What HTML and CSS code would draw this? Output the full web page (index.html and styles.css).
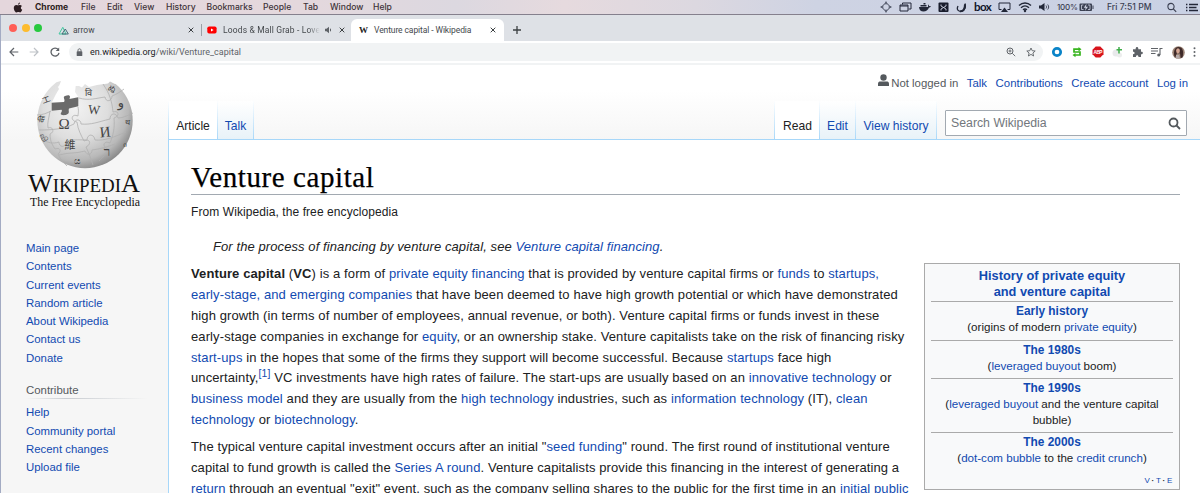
FILE: index.html
```html
<!DOCTYPE html>
<html lang="en">
<head>
<meta charset="utf-8">
<title>Venture capital - Wikipedia</title>
<link rel="stylesheet" href="styles.css">
</head>
<body>
<header class="menubar">
  <svg class="apple" width="10" height="11" viewBox="0 0 20 22"><path fill="#2b1d21" d="M14 1c0 2.500-1.800 4.300-3.800 4.300C10 3 12 1.200 14 1zM10.200 6.700c1.200 0 2-.9 3.800-.9 1.500 0 3 .8 3.800 2-3.300 2-2.800 6.400.6 7.700C17.500 18 15.900 21 14 21c-1.300 0-1.800-.8-3.500-.8S8.200 21 7 21c-2.500 0-5.400-5-5.400-9 0-3.700 2.400-6 5-6 1.600 0 2.700.7 3.600.7z"/></svg>
  <nav class="menus"><b>Chrome</b><span>File</span><span>Edit</span><span>View</span><span>History</span><span>Bookmarks</span><span>People</span><span>Tab</span><span>Window</span><span>Help</span></nav>
  <div class="status">
    <svg width="12" height="12" viewBox="0 0 12 12" fill="none" stroke="#3b4052"><path d="M6 1.500L10.500 6 6 10.500 1.500 6z"/><path d="M6 .5v3M6 8.500v3M.5 6h3M8.500 6h3"/></svg>
    <svg width="13" height="12" viewBox="0 0 13 12" fill="none" stroke="#222738"><path d="M1 4h8v6H1zM3.500 3.500v-1.500h8.500v6H9.500M1 5h8"/></svg>
    <svg width="12" height="12" viewBox="0 0 12 12" fill="#222738"><path d="M0 6h9c.3-1-.2-1.700 0-2.500.8.400 1 1 1 1.600l2 .2c-.4 1-1.300 1.200-2 1.200C9 9.300 7 10.500 4.500 10.500 2 10.500.2 9 0 6zM1.500 4h6v1.600h-6zM4.500 2h2v1.600h-2z"/></svg>
    <svg width="11" height="12" viewBox="0 0 11 12"><rect x="0.500" y="1.500" width="10" height="9.500" rx="1" fill="#181c2c"/><path d="M3 3.500v1.500l5 3V9.500M8 3.500v1.500L3 8V9.500" stroke="#cfd3e2" stroke-width=".9" fill="none"/></svg>
    <svg width="11" height="12" viewBox="0 0 11 12" fill="none" stroke="#222738"><path d="M2 5c-2 4 1 6 4 5 3-.8 4-4 3-7.500" stroke-width="1.300"/><path d="M4 10.200c3 .5 5-2 5-7" stroke-width="2"/></svg>
    <strong class="box">box</strong>
    <svg width="13" height="12" viewBox="0 0 13 12"><path d="M3.500 8.500H1V2h11v6.500H9.500" fill="none" stroke="#222738"/><path d="M6.500 6.500L10 11H3z" fill="#222738"/></svg>
    <svg width="14" height="12" viewBox="0 0 14 12" fill="none" stroke="#222738" stroke-width="1.400"><path d="M1 4.500c3.500-3.400 8.500-3.400 12 0M3 6.700c2.400-2.200 5.600-2.200 8 0M5 8.700c1.300-1 2.700-1 4 0"/><circle cx="7" cy="10" r=".5"/></svg>
    <svg width="12" height="12" viewBox="0 0 12 12"><path d="M0 4.500h2L5.500 2v8L2 7.500H0z" fill="#222738"/><path d="M7 4.500c.7 1 .7 2 0 3M8.700 3.500c1.300 1.600 1.300 3.400 0 5" stroke="#222738" stroke-width=".8" fill="none"/></svg>
    <span class="pct">100%</span>
    <svg width="15" height="12" viewBox="0 0 15 12"><rect x=".5" y="2.500" width="12.500" height="7.500" rx="1" fill="#3b4052"/><path d="M13.500 4.500h1v3.500h-1z" fill="#3b4052"/><path d="M4.300 4H2.500v4.500h2M9 4h2v4.500H9" stroke="#cdd2e2" stroke-width=".8" fill="none"/><path d="M7.500 2.800L4.800 6.700h1.900L6 9.700l3-4H7z" fill="#cdd2e2"/></svg>
    <span class="clock">Fri 7:51 PM</span>
    <svg width="10" height="12" viewBox="0 0 10 12" fill="none" stroke="#3b4052" stroke-width="1.100"><circle cx="4" cy="5.500" r="3.100"/><path d="M6.400 8l2.800 2.800"/></svg>
    <svg width="12" height="12" viewBox="0 0 12 12" stroke="#222738" stroke-width="1.300"><path d="M0 3.500h1.400M3 3.500h9M0 6.500h1.400M3 6.500h7.500M0 9.500h1.400M3 9.500h9"/></svg>
  </div>
</header>
<div class="window">
  <div class="tabs">
    <div class="lights"><i class="red"></i><i class="yellow"></i><i class="green"></i></div>
    <div class="tab tab-a">
      <svg width="11" height="9" viewBox="0 0 11 9" fill="none" stroke-width="1"><path d="M1 8l3.800-6.700L8 8z" stroke="#42c8a0"/><path d="M4 8l3.300-5L10.300 8z" stroke="#456b76"/></svg>
      <span class="tab-title">arrow</span>
      <svg class="x" width="6" height="6" viewBox="0 0 6 6"><path d="M.7.7l4.600 4.600M5.300.7L.7 5.300"/></svg>
    </div>
    <div class="tab tab-b">
      <svg width="10" height="8" viewBox="0 0 10 8"><rect x=".3" y=".5" width="9.300" height="7" rx="1.800" fill="#f00"/><path d="M4 2.500L6.600 4 4 5.500z" fill="#fff"/></svg>
      <span class="tab-title fade">Loods &amp; Mall Grab - Love Is</span>
      <svg class="snd" width="8" height="8" viewBox="0 0 8 8"><path d="M0 2.800h1.500L4 .8v6.400L1.500 5.200H0z" fill="#5f6368"/><path d="M5.500 2.700v2.600" stroke="#5f6368"/></svg>
      <svg class="x" width="6" height="6" viewBox="0 0 6 6"><path d="M.7.7l4.600 4.600M5.300.7L.7 5.300"/></svg>
    </div>
    <div class="tab active">
      <b class="w">W</b>
      <span class="tab-title">Venture capital - Wikipedia</span>
      <svg class="x" width="6" height="6" viewBox="0 0 6 6"><path d="M.7.7l4.600 4.600M5.300.7L.7 5.300"/></svg>
    </div>
    <svg class="plus" width="8" height="8" viewBox="0 0 8 8"><path d="M4 0v8M0 4h8" stroke="#3c4043" stroke-width="1.300"/></svg>
  </div>
  <div class="toolbar">
    <svg class="back" width="10" height="10" viewBox="0 0 10 10" fill="none" stroke="#5f6368" stroke-width="1.200"><path d="M9.300 5H1.200M5 1L1 5l4 4"/></svg>
    <svg class="fwd" width="10" height="10" viewBox="0 0 10 10" fill="none" stroke="#bdc1c6" stroke-width="1.200"><path d="M.7 5h8.100M5 1l4 4-4 4"/></svg>
    <svg class="reload" width="10" height="10" viewBox="0 0 10 10" fill="none" stroke="#5f6368" stroke-width="1.300"><path d="M8.300 2.700A4 4 0 1 0 9 5.800"/><path d="M9.200.5v3.500H5.700z" fill="#5f6368" stroke="none"/></svg>
    <div class="omnibox">
      <svg width="7" height="9" viewBox="0 0 7 9"><rect x=".7" y="3.300" width="5.600" height="4.700" rx=".6" fill="#5f6368"/><path d="M2 3.500V2.300c0-2 3-2 3 0v1.200" fill="none" stroke="#5f6368"/></svg>
      <span class="url"><em>en.wikipedia.org</em>/wiki/Venture_capital</span>
      <svg class="zoom" width="10" height="10" viewBox="0 0 10 10" fill="none" stroke="#5f6368"><circle cx="4" cy="4" r="3"/><path d="M6.300 6.300l2.900 2.900M2.500 4h3M4 2.500v3" stroke-width=".9"/></svg>
      <svg class="star" width="10" height="10" viewBox="0 0 10 10" fill="none" stroke="#5f6368" stroke-width=".9"><path d="M5 1l1.200 2.700 3 .3-2.300 2 .7 3L5 7.400 2.400 9l.7-3L.8 4l3-.3z"/></svg>
    </div>
    <div class="exts">
      <svg width="12" height="12" viewBox="0 0 12 12"><circle cx="6" cy="6" r="3.700" fill="#fff" stroke="#0a84c8" stroke-width="2.700"/></svg>
      <svg width="12" height="12" viewBox="0 0 12 12" fill="none" stroke="#36b41c" stroke-width="1.700"><path d="M8 3.200H3V6h6v3H4"/><path d="M7.500 1v4.400L10.500 3.200zM4.500 6.900v4.400L1.500 9z" fill="#36b41c" stroke="none"/></svg>
      <svg width="12" height="12" viewBox="0 0 12 12"><path d="M3.700.5h4.600l3.200 3.200v4.600l-3.200 3.200H3.700L.5 8.300V3.700z" fill="#d8141c"/><text x="6" y="7.800" text-anchor="middle" textLength="9" font-size="4.800" class="abp">ABP</text></svg>
      <svg width="12" height="12" viewBox="0 0 12 12"><circle cx="4" cy="7" r="3.500" fill="#e8e9eb"/><circle cx="7.500" cy="9" r="2.500" fill="#eceded"/><path d="M7 1v6.500M4.500 3.800h5.500" stroke="#3fae49" stroke-width="1.500"/></svg>
      <svg width="11" height="12" viewBox="0 0 11 12" fill="#5f6368"><path d="M1 3.300h2.700c-.5-3 3-3 2.600 0H9v2.500c2.500-.3 2.500 2.600 0 2.400V11H6.500c0-2.300-2.600-2.300-2.600 0H1V8.200c2.200 0 2.200-2.400 0-2.400z"/></svg>
      <svg width="12" height="12" viewBox="0 0 12 12"><path d="M0 2.500h7M0 5h7M0 7.500h4.500M9 9V2.500h2.500" stroke="#5f6368" fill="none" stroke-width="1.100"/><circle cx="7.700" cy="9" r="1.500" fill="#5f6368"/></svg>
      <svg width="13" height="13" viewBox="0 0 13 13"><circle cx="6.500" cy="6.500" r="6.300" fill="#9c8476"/><path d="M3 12C1 7 2 1 6.500 1S12 6 10.500 11.500L8.700 12 8 7.500 5 7z" fill="#3e2a29"/><ellipse cx="6" cy="4.800" rx="1.900" ry="2.500" fill="#d6a794"/><path d="M4 9l3 0 1 3.500H4z" fill="#b6aaa9"/></svg>
      <svg width="3" height="12" viewBox="0 0 3 12" fill="#5f6368"><circle cx="1.500" cy="2.300" r="1"/><circle cx="1.500" cy="6" r="1"/><circle cx="1.500" cy="9.700" r="1"/></svg>
    </div>
  </div>
  <div class="page">
    <aside class="side">
      <svg class="logo" width="120" height="134" viewBox="0 0 120 134">
        <defs>
          <radialGradient id="ball" cx=".4" cy=".36" r=".68"><stop offset="0" stop-color="#f2f2f2"/><stop offset=".5" stop-color="#dedede"/><stop offset=".82" stop-color="#b8b8b8"/><stop offset="1" stop-color="#858585"/></radialGradient>
          <clipPath id="disc"><path d="M0 2H36L40 1L38.500 5L37 7L38 9L34.500 15L30.700 22.700L43 22L44 16L48 16V19L57.300 17L54 12L54.700 6L58 6L61 7.500L64 4L68 7L76 5L87 3.500L89 1.500L94 4L97 3L120 0V134H0z"/></clipPath>
        </defs>
        <g clip-path="url(#disc)">
          <circle cx="64" cy="40.500" r="47.700" fill="url(#ball)"/>
          <g transform="translate(1 0)" fill="none" stroke="#b0b0b0" stroke-width=".8"><path d="M28 31c-1 7-3 12-2 17 5-2 7 4 2 6 0 8 3 12 5 15 5-2 7 2 3 5 2 5 5 8 9 12M56 27c1 5 0 7 0 9-7-3-8 5-1 6 1 8 4 13 7 19 6-3 8 3 2 6 3 6 5 12 7 18M81 4c7 10 9 18 10 28 6-2 7 4 1 6 1 10-1 18-4 25-7-3-8 4-2 6-3 6-5 8-9 12M15 35c6 0 10-2 14-4M17 50c14 0 25-1 35-6 1-6 7-5 7 0 10 1 17-2 29-5 0-6 6-7 8-1 6 0 10-3 15-5M19 59c7 4 12 5 18 3 0 6 7 6 7-1 8-2 15-1 21-1 0-6 7-7 8 0 10 1 19-3 31-8M37 75c10-3 16-1 26-4 2 5 7 4 7-1 8-1 15-3 23-6M57 18c10 3 18 0 26-1 1 6 7 4 7-1 5-2 8-4 12-7"/></g>
        </g>
        <path fill="#6a6a6a" d="M30.700 22.700L43 22c2-2-2-5 1-6 3-1 5-1 5 1l-.5 2 8.800-1.700v9L48 28.500c-1 2 1 4-1.300 5.500-2 1.500-5 1.500-6.700.5-1-1.500 2-3 .5-4.700l-9.800 1z"/>
        <g class="glyphs" text-anchor="middle"><text x="43" y="49" font-size="15">Ω</text><text x="73" y="34" font-size="13" textLength="12" lengthAdjust="spacingAndGlyphs" transform="rotate(5 73 30)">W</text><text x="84" y="57" font-size="15" transform="rotate(-6 84 52)">И</text><text x="49" y="69" font-size="11">維</text><text x="86" y="76" font-size="13">ר</text><text x="100" y="27" font-size="13">و</text><text x="67" y="16" font-size="9">वि</text><text x="91" y="12" font-size="8" transform="rotate(30 91 9)">ぬ</text><text x="25" y="23" font-size="9" transform="rotate(-20 25 19)">エ</text><text x="21" y="42" font-size="8" transform="rotate(-80 21 39)">की</text><text x="23" y="60" font-size="8" transform="rotate(60 23 57)">வி</text><text x="56" y="84" font-size="9">ය</text><text x="106" y="45" font-size="8">थ</text><text x="104" y="67" font-size="7">ი</text></g>
        <g class="wordmark"><text x="7" y="112" textLength="112" lengthAdjust="spacingAndGlyphs"><tspan font-size="25">W</tspan><tspan font-size="18">IKIPEDI</tspan><tspan font-size="25">A</tspan></text><text x="9" y="126" font-size="12.500" textLength="110" lengthAdjust="spacingAndGlyphs">The Free Encyclopedia</text></g>
      </svg>
      <nav class="links first"><a>Main page</a><a>Contents</a><a>Current events</a><a>Random article</a><a>About Wikipedia</a><a>Contact us</a><a>Donate</a></nav>
      <h3>Contribute</h3>
      <nav class="links"><a>Help</a><a>Community portal</a><a>Recent changes</a><a>Upload file</a></nav>
    </aside>
    <main class="main">
      <div class="head">
        <div class="personal">
          <svg width="11" height="13" viewBox="0 0 11 13" fill="#54595d"><circle cx="5.500" cy="3.500" r="3.200"/><path d="M0 12V9.500C0 8 1 7.400 2.500 7.400h6C10 7.400 11 8 11 9.500V12z"/></svg>
          <span>Not logged in</span><a>Talk</a><a>Contributions</a><a>Create account</a><a>Log in</a>
        </div>
        <div class="views">
          <div class="vt sel article">Article</div><div class="vt talk"><a>Talk</a></div>
          <div class="vt sel read">Read</div><div class="vt edit"><a>Edit</a></div><div class="vt hist"><a>View history</a></div>
          <div class="search"><span>Search Wikipedia</span><svg width="13" height="13" viewBox="0 0 13 13" fill="none" stroke="#54595d" stroke-width="1.800"><circle cx="5.500" cy="5.500" r="4"/><path d="M8.500 8.500l3.500 3.500"/></svg></div>
        </div>
      </div>
      <article class="content">
        <h1>Venture capital</h1>
        <p class="from">From Wikipedia, the free encyclopedia</p>
        <div class="cols">
          <div class="text">
            <p class="hat">For the process of financing by venture capital, see <a>Venture capital financing</a>.</p>
            <p class="para"><b>Venture capital</b> (<b>VC</b>) is a form of <a>private equity financing</a> that is provided by venture capital firms or <a>funds</a> to <a>startups,<br>early-stage, and emerging companies</a> that have been deemed to have high growth potential or which have demonstrated<br>high growth (in terms of number of employees, annual revenue, or both). Venture capital firms or funds invest in these<br>early-stage companies in exchange for <a>equity</a>, or an ownership stake. Venture capitalists take on the risk of financing risky<br><a>start-ups</a> in the hopes that some of the firms they support will become successful. Because <a>startups</a> face high<br>uncertainty,<sup><a>[1]</a></sup> VC investments have high rates of failure. The start-ups are usually based on an <a>innovative technology</a> or<br><a>business model</a> and they are usually from the <a>high technology</a> industries, such as <a>information technology</a> (IT), <a>clean<br>technology</a> or <a>biotechnology</a>.</p>
            <p class="para">The typical venture capital investment occurs after an initial "<a>seed funding</a>" round. The first round of institutional venture<br>capital to fund growth is called the <a>Series A round</a>. Venture capitalists provide this financing in the interest of generating a<br><a>return</a> through an eventual "exit" event, such as the company selling shares to the public for the first time in an <a>initial public</a></p>
          </div>
          <aside class="infobox">
            <h2><a>History of private equity<br>and venture capital</a></h2>
            <section><b><a>Early history</a></b><p>(origins of modern <a>private equity</a>)</p></section>
            <section><b><a>The 1980s</a></b><p>(<a>leveraged buyout</a> boom)</p></section>
            <section class="tall"><b><a>The 1990s</a></b><p>(<a>leveraged buyout</a> and the venture capital<br>bubble)</p></section>
            <section><b><a>The 2000s</a></b><p>(<a>dot-com bubble</a> to the <a>credit crunch</a>)</p></section>
            <div class="vte"><a>V</a><b>·</b><a>T</a><b>·</b><a>E</a></div>
          </aside>
        </div>
      </article>
    </main>
  </div>
</div>
</body>
</html>
```
FILE: styles.css
```css
* { box-sizing: border-box; }
body { margin: 0; width: 1200px; height: 493px; overflow: hidden; font-family: "Liberation Sans", Arial, sans-serif; color: #202122; background: #fff; }
p, h1, h2, h3 { margin: 0; font-weight: normal; }
a { color: #114ab1; }
svg { flex: none; display: block; }

.menubar { height: 15px; display: flex; align-items: center; border-bottom: 1px solid #85808d; background: linear-gradient(90deg, #e4d6dc 0, #e4d8dd 25%, #dcd8e0 38%, #e6dade 47%, #dcd8e0 58%, #ced3e3 68%, #c9d1e4 100%); font: 500 8.6px/14px Inter, sans-serif; color: #3e3339; white-space: nowrap; }
.apple { margin-left: 13px; }
.menus { display: grid; grid-template-columns: 46px 26px 27px 32px 40.500px 56.500px 40px 27px 43px 30px; margin-left: 12px; }
.menus b { font-weight: 700; color: #2b1d21; }
.status { margin-left: auto; display: flex; align-items: center; gap: 7px; margin-right: 2px; color: #3b4052; font-size: 8px; }
.box { font: 700 11.500px/12px Lato, sans-serif; letter-spacing: -.6px; color: #11152a; width: 17px; }
.pct { width: 20px; letter-spacing: -.2px; margin-left: -1px; }
.pct + svg { margin-left: -5px; }
.clock { font-size: 8.600px; width: 46px; margin-left: 6px; }
.clock + svg { margin-left: 7px; }
.status svg:last-child { margin-left: 2px; }

.window { border-left: 1px solid #a3abc3; height: 478px; }
.tabs { height: 26px; background: #dee1e6; display: flex; align-items: flex-end; font: 400 8.500px/22px Roboto, sans-serif; color: #45494d; }
.lights { display: flex; gap: 4.500px; width: 48px; padding: 0 0 9px 8px; }
.lights i { width: 8px; height: 8px; border-radius: 50%; flex: none; }
.red { background: #ff5f57; } .yellow { background: #fdbc2e; } .green { background: #27c93f; }
.tab { height: 22px; display: flex; align-items: center; white-space: nowrap; }
.tab-a { width: 152px; padding: 0 7px 0 9px; }
.tab-a .tab-title { margin-left: 4px; }
.x { margin-left: auto; stroke: #3c4043; stroke-width: 1; }
.tab-b { width: 150px; padding: 0 6px 0 6px; background: linear-gradient(#9aa0a6, #9aa0a6) 0 50% / 1px 12px no-repeat; }
.tab-b .tab-title { margin-left: 6px; width: 97px; overflow: hidden; letter-spacing: .15px; -webkit-mask-image: linear-gradient(90deg, #000 88%, transparent); mask-image: linear-gradient(90deg, #000 88%, transparent); }
.snd { margin-left: 5px; }
.active { width: 153px; background: #fff; border-radius: 6px 6px 0 0; padding: 0 8px; }
.w { font: 700 9px/22px "Liberation Serif", serif; color: #222; width: 10px; }
.active .tab-title { margin-left: 5px; letter-spacing: -.1px; }
.plus { margin: 0 0 7px 9px; }
.toolbar { height: 24px; border-bottom: 2px solid #f1f3f4; display: flex; align-items: center; }
.back { margin-left: 8px; } .fwd { margin-left: 10px; } .reload { margin-left: 11px; }
.omnibox { flex: none; width: 974px; height: 18px; border-radius: 9px; background: #f1f3f4; display: flex; align-items: center; margin-left: 9px; padding: 0 7px; font: 400 9px/18px Roboto, sans-serif; color: #5f6368; }
.url { margin-left: 7px; letter-spacing: .02px; white-space: nowrap; }
.url em { font-style: normal; color: #202124; }
.zoom { margin-left: auto; } .star { margin-left: 10px; }
.exts { display: flex; align-items: center; gap: 8.300px; margin-left: 8px; flex: none; }
.abp { font-family: "Liberation Sans"; font-weight: bold; fill: #fff; }

.page { display: flex; height: 428px; background: linear-gradient(#fff 25px, #f6f6f6 75px); }
.side { width: 167px; flex: none; }
.logo { margin: 15px 0 0 20px; }
.glyphs { fill: #444; font-family: "Liberation Serif", "DejaVu Sans", "Noto Sans CJK SC", serif; }
.wordmark { fill: #111; font-family: "Liberation Serif", serif; }
.links { display: flex; flex-direction: column; margin-left: 25px; font-size: 11.400px; line-height: 18.270px; }
.first { margin-top: 25px; }
.side h3 { margin: 14px 20px 4.500px 25px; font-size: 11.400px; line-height: 18px; color: #54595d; background: linear-gradient(90deg, transparent, #c8ccd1 33%, transparent) bottom / 100% 1px no-repeat; }
.main { flex: 1; min-width: 0; }
.head { height: 74px; }
.personal { display: flex; justify-content: flex-end; align-items: center; gap: 8.500px; height: 36px; padding: 0 12px 1px 0; font-size: 11.400px; color: #54595d; white-space: nowrap; }
.personal svg { margin: -4px -6px 0 0; }
.views { height: 38px; display: flex; font-size: 12.100px; line-height: 14px; }
.vt { padding-top: 18px; text-align: center; border-left: 1px solid; border-image: linear-gradient(#fff, #a7d7f9) 1; background: linear-gradient(#fff, #e8f2f8); white-space: nowrap; }
.sel { background: #fff; }
.article { width: 49px; border-right: 0; } .talk { width: 37px; border-right: 1px solid; }
.read { width: 45px; margin-left: 520px; padding-left: 1px; } .edit { width: 36px; } .hist { width: 82px; border-right: 1px solid; }
.search { width: 242px; height: 26px; margin: 9px 0 0 8px; background: #fff; border: 1px solid #a2a9b1; border-radius: 1px; display: flex; justify-content: space-between; align-items: center; padding: 0 5px; color: #72777d; font-size: 12.300px; }
.content { height: 354px; background: #fff; border: 1px solid #a7d7f9; border-width: 1px 0 0 1px; padding: 20px 20px 0 22px; white-space: nowrap; }
h1 { font: 29px/34px "Liberation Serif", serif; letter-spacing: .58px; color: #000; height: 35px; border-bottom: 1px solid #a2a9b1; -webkit-text-stroke: .25px #000; }
.from { font-size: 12px; line-height: 16px; margin-top: 9px; letter-spacing: .08px; }
.cols { display: flex; }
.text { width: 733px; flex: none; padding-top: 17px; }
.hat { font-style: italic; font-size: 13px; line-height: 20.830px; margin-left: 22px; letter-spacing: .09px; }
.para { font-size: 13px; line-height: 20.830px; margin-top: 6.500px; letter-spacing: .108px; }
sup { font-size: 10.400px; line-height: 1; vertical-align: super; }
.infobox { width: 256px; height: 227px; flex: none; margin-top: 43px; border: 1px solid #aaa; background: #f8f9fa; padding: 3px 6px 0; text-align: center; font-size: 11.500px; }
.infobox h2 { font-weight: bold; font-size: 12.800px; line-height: 15.500px; height: 34px; padding-top: 1px; }
section { border-top: 1px solid #aaa; height: 38.500px; padding-top: 1px; font-size: 11.600px; line-height: 16px; }
section b { display: block; font-size: 11.900px; }
.tall { height: 54px; }
.vte { text-align: right; font-size: 8px; line-height: 10px; letter-spacing: 1.700px; margin: 5px -1px 0 0; }
```
